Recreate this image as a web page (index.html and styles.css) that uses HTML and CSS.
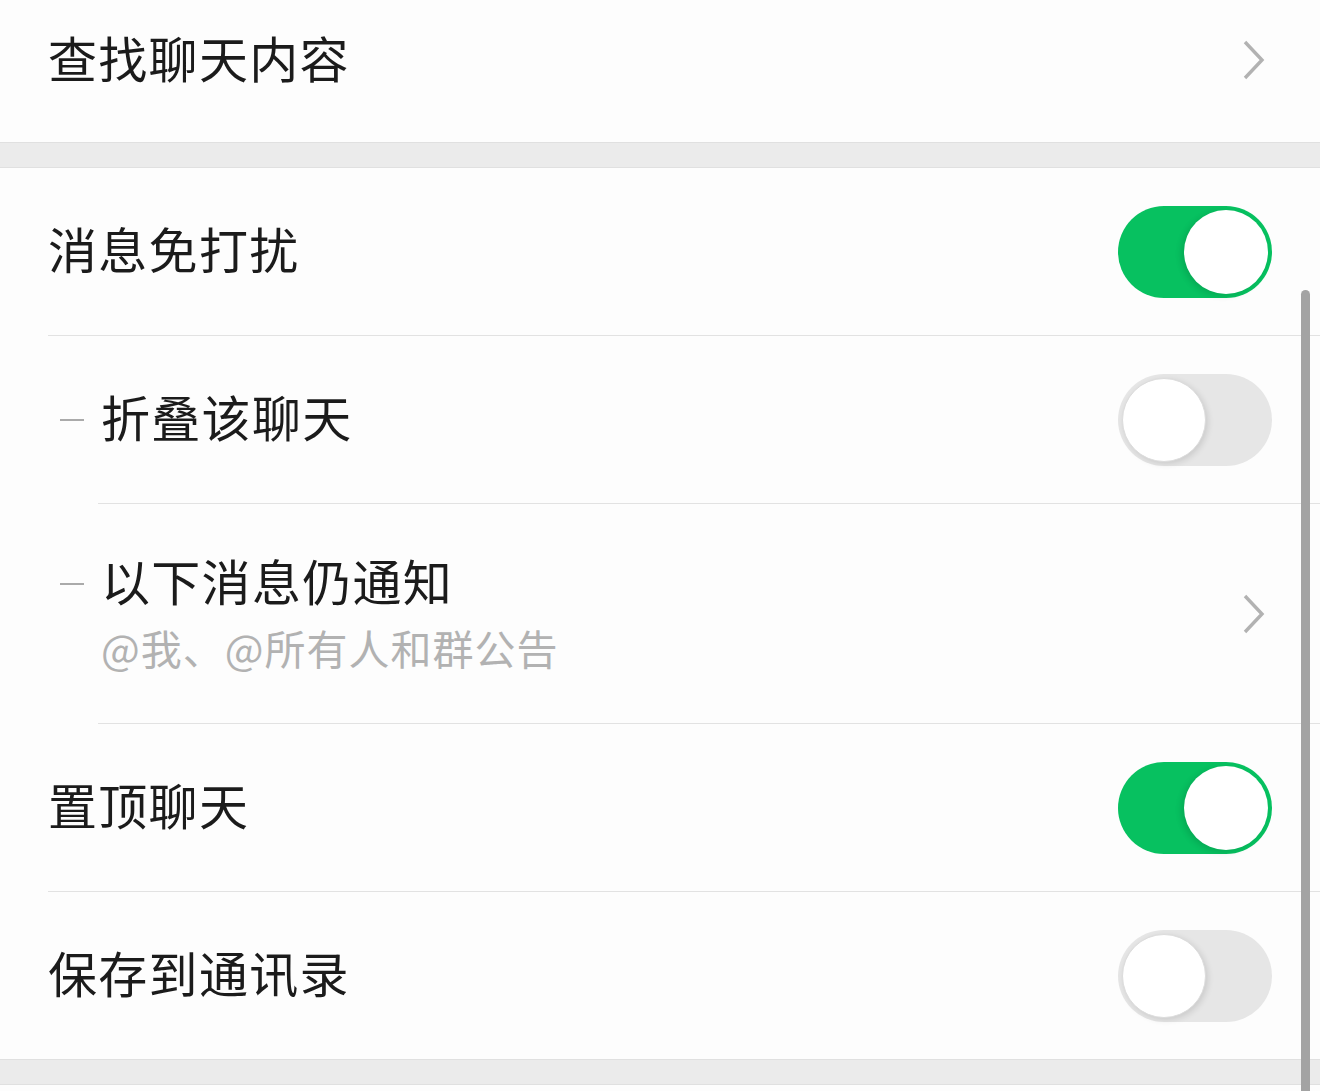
FILE: index.html
```html
<!DOCTYPE html>
<html lang="zh-CN">
<head>
    <meta charset="UTF-8">
    <meta name="viewport" content="width=device-width, initial-scale=1.0">
    <title>聊天信息</title>
    <link rel="stylesheet" href="styles.css">
</head>
<body>
    <div class="page">
        <!-- 查找 -->
        <div class="group">
            <div class="cell cell-top">
                <span class="label">查找聊天内容</span>
                <span class="chevron"><svg width="24" height="42" viewBox="0 0 24 42"><path d="M3 3 L20 21 L3 39" fill="none" stroke="#b2b2b2" stroke-width="3.4"/></svg></span>
            </div>
        </div>

        <div class="gap"></div>

        <!-- 通知设置 -->
        <div class="group">
            <div class="cell">
                <span class="label">消息免打扰</span>
                <span class="switch on"><span class="knob"></span></span>
            </div>
            <div class="line"></div>
            <div class="cell sub">
                <span class="dash"></span>
                <span class="label">折叠该聊天</span>
                <span class="switch"><span class="knob"></span></span>
            </div>
            <div class="line indent"></div>
            <div class="cell sub tall">
                <div class="text">
                    <div class="title-row">
                        <span class="dash"></span>
                        <span class="label">以下消息仍通知</span>
                    </div>
                    <span class="desc">@我、@所有人和群公告</span>
                </div>
                <span class="chevron"><svg width="24" height="42" viewBox="0 0 24 42"><path d="M3 3 L20 21 L3 39" fill="none" stroke="#b2b2b2" stroke-width="3.4"/></svg></span>
            </div>
            <div class="line indent"></div>
            <div class="cell">
                <span class="label">置顶聊天</span>
                <span class="switch on"><span class="knob"></span></span>
            </div>
            <div class="line"></div>
            <div class="cell">
                <span class="label">保存到通讯录</span>
                <span class="switch"><span class="knob"></span></span>
            </div>
        </div>

        <div class="gap"></div>
    </div>
    <div class="scrollbar"></div>
</body>
</html>
```

FILE: styles.css
```css
body {
    margin: 0;
    background: #fdfdfd;
    font-family: "Noto Sans CJK SC", "Noto Sans", sans-serif;
    color: #1b1b1b;
    overflow: hidden;
}
.page {
    width: 1320px;
}
.group {
    background: #fdfdfd;
}
.cell {
    display: flex;
    align-items: center;
    height: 167px;
    padding: 0 48px 0 48px;
}
.cell-top {
    height: 120px;
    padding-bottom: 22px;
}
.label {
    flex: 1;
    font-size: 49px;
    line-height: 1;
    letter-spacing: 1.3px;
    padding-bottom: 8px;
}
.cell.sub {
    padding-left: 60px;
}
.cell.tall {
    height: 219px;
    align-items: flex-start;
}
.dash {
    width: 24px;
    height: 2px;
    background: #aaaaaa;
    margin-right: 17px;
}
.text {
    flex: 1;
    display: flex;
    flex-direction: column;
    gap: 15px;
    padding-top: 51px;
}
.title-row {
    display: flex;
    align-items: center;
}
.desc {
    font-size: 41px;
    line-height: 1;
    color: #b2b2b2;
    letter-spacing: 1px;
    padding-left: 41px;
}
.chevron {
    display: flex;
    margin-right: 6px;
}
.tall .chevron {
    align-self: center;
}
.line {
    height: 1px;
    background: #e2e2e2;
    margin-left: 48px;
}
.line.indent {
    margin-left: 98px;
}
.gap {
    height: 24px;
    background: #ebebeb;
    border-top: 1px solid #e0e0e0;
    border-bottom: 1px solid #e0e0e0;
}
.switch {
    position: relative;
    width: 154px;
    height: 92px;
    border-radius: 46px;
    background: #e6e6e6;
    box-sizing: border-box;
}
.switch .knob {
    position: absolute;
    top: 4px;
    left: 4px;
    width: 84px;
    height: 84px;
    border-radius: 50%;
    background: #ffffff;
    box-sizing: border-box;
    border: 1px solid #dcdcdc;
    box-shadow: 2px 2px 6px rgba(0, 0, 0, 0.12);
}
.switch.on {
    background: #07c160;
}
.switch.on .knob {
    left: 66px;
    border: none;
    box-shadow: -3px 2px 6px rgba(0, 0, 0, 0.12);
}
.scrollbar {
    position: absolute;
    left: 1301px;
    top: 290px;
    width: 9px;
    height: 820px;
    border-radius: 5px;
    background: #a3a3a3;
}
```
